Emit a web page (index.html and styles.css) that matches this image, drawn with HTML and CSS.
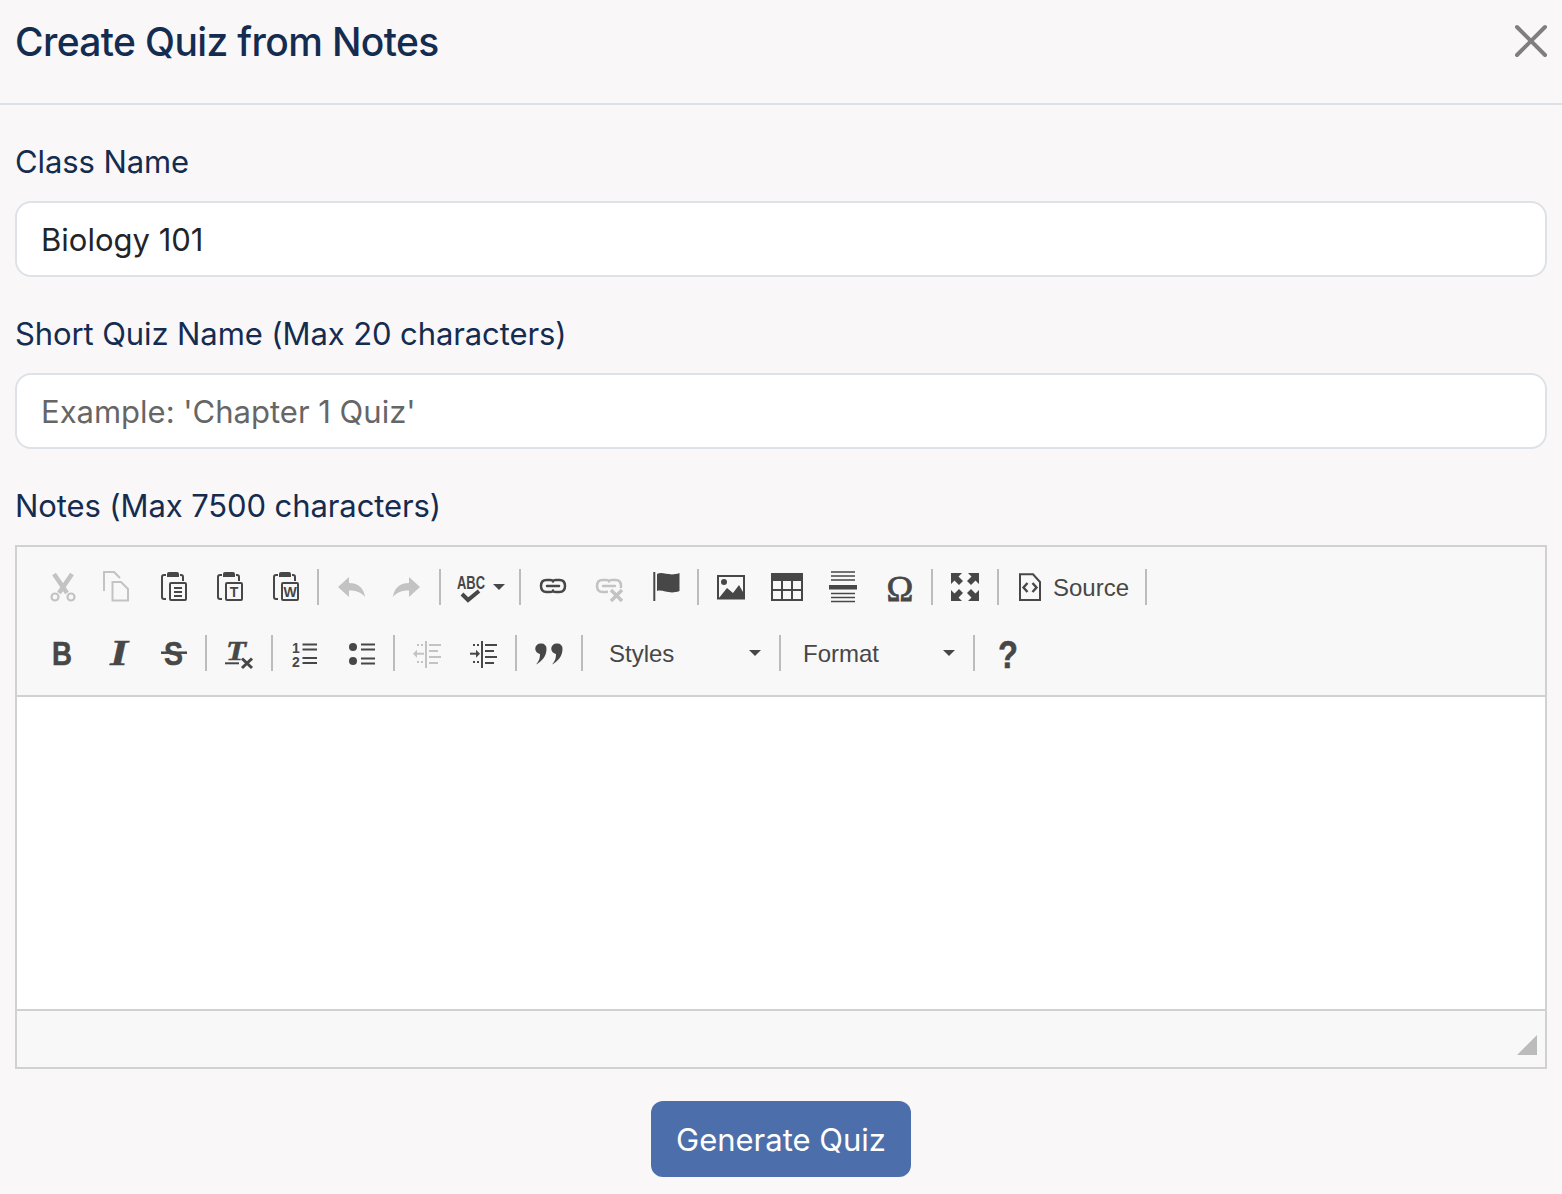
FILE: index.html
```html
<!DOCTYPE html>
<html lang="en">
<head>
<meta charset="utf-8">
<title>Create Quiz from Notes</title>
<link rel="stylesheet" href="styles.css">
</head>
<body>
<header class="head">
  <h1 class="title">Create Quiz from Notes</h1>
  <button class="close" aria-label="Close"><svg width="32" height="32" viewBox="0 0 32 32"><path d="M2 2L30 30M30 2L2 30" fill="none" stroke="currentColor" stroke-width="4" stroke-linecap="round"/></svg></button>
</header>
<main class="form">
  <label class="label">Class Name</label>
  <input class="field" type="text" value="Biology 101">
  <label class="label">Short Quiz Name (Max 20 characters)</label>
  <input class="field" type="text" placeholder="Example: 'Chapter 1 Quiz'">
  <label class="label">Notes (Max 7500 characters)</label>
  <section class="editor">
    <div class="toolbar">
      <div class="row">
        <span class="tb off"><svg width="32" height="32" viewBox="0 0 32 32"><path d="M9 3L22 22M27 3L14 22" fill="none" stroke="currentColor" stroke-width="4.500"/><circle cx="10" cy="26" r="3.500" fill="none" stroke="currentColor" stroke-width="2.200"/><circle cx="26" cy="26" r="3.500" fill="none" stroke="currentColor" stroke-width="2.200"/></svg></span>
        <span class="tb off"><svg width="32" height="32" viewBox="0 0 32 32"><path d="M3 20V1H13L19 7" fill="none" stroke="currentColor" stroke-width="2"/><path d="M11.500 11H20L27 18V29.500H11.500Z" fill="none" stroke="currentColor" stroke-width="2"/></svg></span>
        <span class="tb"><svg width="32" height="32" viewBox="0 0 32 32"><path d="M9 4H7Q5 4 5 6V26Q5 28 7 28H9M23 4H24Q26 4 26 6V10" fill="none" stroke="currentColor" stroke-width="2"/><path d="M10 6V3Q10 1 12 1H20Q22 1 22 3V6Z" fill="currentColor"/><rect x="13" y="12" width="16" height="17" rx="1" fill="none" stroke="currentColor" stroke-width="2"/><path d="M17 17H25M17 21H25M17 25H25" stroke="currentColor" stroke-width="2"/></svg></span>
        <span class="tb"><svg width="32" height="32" viewBox="0 0 32 32"><path d="M9 4H7Q5 4 5 6V26Q5 28 7 28H9M23 4H24Q26 4 26 6V10" fill="none" stroke="currentColor" stroke-width="2"/><path d="M10 6V3Q10 1 12 1H20Q22 1 22 3V6Z" fill="currentColor"/><rect x="13" y="12" width="16" height="17" rx="1" fill="none" stroke="currentColor" stroke-width="2"/><text x="21" y="26" class="svg-bold" font-size="14" text-anchor="middle" fill="currentColor">T</text></svg></span>
        <span class="tb"><svg width="32" height="32" viewBox="0 0 32 32"><path d="M9 4H7Q5 4 5 6V26Q5 28 7 28H9M23 4H24Q26 4 26 6V10" fill="none" stroke="currentColor" stroke-width="2"/><path d="M10 6V3Q10 1 12 1H20Q22 1 22 3V6Z" fill="currentColor"/><rect x="13" y="12" width="16" height="17" rx="1" fill="none" stroke="currentColor" stroke-width="2"/><text x="21" y="26" class="svg-bold" font-size="14" text-anchor="middle" fill="currentColor">W</text></svg></span>
        <span class="sep"></span>
        <span class="tb off"><svg width="32" height="32" viewBox="0 0 32 32"><path d="M3 16L14 6V12C24 12 29 18 30 26C26 21 21 19.500 14 19.500V26Z" fill="currentColor"/></svg></span>
        <span class="tb off"><svg width="32" height="32" viewBox="0 0 32 32"><path d="M29 16L18 6V12C8 12 3 18 2 26C6 21 11 19.500 18 19.500V26Z" fill="currentColor"/></svg></span>
        <span class="sep"></span>
        <span class="tb tb-spell"><svg width="32" height="32" viewBox="0 0 32 32"><text x="2" y="18" class="svg-bold" font-size="19" textLength="28" lengthAdjust="spacingAndGlyphs" fill="currentColor">ABC</text><path d="M7 23L13 29L24 20" fill="none" stroke="currentColor" stroke-width="4"/></svg><span class="caret caret-spell"></span></span>
        <span class="sep"></span>
        <span class="tb"><svg width="32" height="32" viewBox="0 0 32 32"><path d="M9.500 9Q4 9 4 15T9.500 21H13Q16 21 16 19.500Q16 21 19 21H22.500Q28 21 28 15T22.500 9H19Q16 9 16 10.500Q16 9 13 9Z" fill="none" stroke="currentColor" stroke-width="2.500" stroke-linejoin="round"/><path d="M10 15H22" stroke="currentColor" stroke-width="2.500" stroke-linecap="round"/></svg></span>
        <span class="tb off"><svg width="32" height="32" viewBox="0 0 32 32"><path d="M9.500 9Q4 9 4 15T9.500 21H13Q16 21 16 19.500Q16 21 19 21H22.500Q28 21 28 15T22.500 9H19Q16 9 16 10.500Q16 9 13 9Z" fill="none" stroke="currentColor" stroke-width="2.500" stroke-linejoin="round"/><path d="M10 15H22" stroke="currentColor" stroke-width="2.500" stroke-linecap="round"/><rect x="15" y="17" width="16" height="15" fill="#f8f8f8"/><path d="M18 19L29 30M29 19L18 30" stroke="currentColor" stroke-width="3.500"/></svg></span>
        <span class="tb"><svg width="32" height="32" viewBox="0 0 32 32"><path d="M5.300 1V30" stroke="currentColor" stroke-width="2"/><path d="M8 3C14 0 20 6 30.500 2V20C20 24 14 18 8 20Z" fill="currentColor"/></svg></span>
        <span class="sep"></span>
        <span class="tb"><svg width="32" height="32" viewBox="0 0 32 32"><rect x="3" y="5" width="26" height="22.500" fill="none" stroke="currentColor" stroke-width="2"/><circle cx="9" cy="11" r="3" fill="currentColor"/><path d="M4 27L12 17L18 22L24 14L28 21V27Z" fill="currentColor"/></svg></span>
        <span class="tb"><svg width="32" height="32" viewBox="0 0 32 32"><rect x="1" y="3" width="30" height="26" fill="none" stroke="currentColor" stroke-width="2"/><rect x="0" y="2" width="32" height="8" fill="currentColor"/><path d="M11 9V29M21 9V29M1 19H31" stroke="currentColor" stroke-width="2"/></svg></span>
        <span class="tb"><svg width="32" height="32" viewBox="0 0 32 32"><path d="M4 1H28M4 5H28M4 9H28M4 22.500H28M4 26.500H28M4 30.500H28" stroke="currentColor" stroke-width="1.500"/><rect x="2" y="14" width="28" height="4.500" fill="currentColor"/></svg></span>
        <span class="tb"><svg width="32" height="32" viewBox="0 0 32 32"><text x="17" y="30" class="svg-serif" font-size="36" text-anchor="middle" fill="currentColor" stroke="currentColor" stroke-width="0.800">Ω</text></svg></span>
        <span class="sep"></span>
        <span class="tb"><svg width="32" height="32" viewBox="0 0 32 32"><g fill="currentColor"><path d="M2 2H13L9.500 5.500L14 10L10 14L5.500 9.500L2 13Z"/><path d="M30 2H19L22.500 5.500L18 10L22 14L26.500 9.500L30 13Z"/><path d="M2 30H13L9.500 26.500L14 22L10 18L5.500 22.500L2 19Z"/><path d="M30 30H19L22.500 26.500L18 22L22 18L26.500 22.500L30 19Z"/></g></svg></span>
        <span class="sep"></span>
        <span class="tb tb-source"><svg width="32" height="32" viewBox="0 0 32 32"><path d="M6 3.300H19L26 11V29H6Z" fill="none" stroke="currentColor" stroke-width="2"/><path d="M13.500 12L9.500 16.500L13.500 21M18.500 12L22.500 16.500L18.500 21" fill="none" stroke="currentColor" stroke-width="2.400"/></svg><span class="tb-text tb-text-top">Source</span></span>
        <span class="sep"></span>
      </div>
      <div class="row">
        <span class="tb"><svg width="32" height="32" viewBox="0 0 32 32"><text x="7" y="28" class="svg-bold" font-size="33" textLength="20" lengthAdjust="spacingAndGlyphs" fill="currentColor" stroke="currentColor" stroke-width="0.500">B</text></svg></span>
        <span class="tb"><svg width="32" height="32" viewBox="0 0 32 32"><text x="9" y="28" class="svg-serif-bi" font-size="36" textLength="18" lengthAdjust="spacingAndGlyphs" fill="currentColor" stroke="currentColor" stroke-width="0.500">I</text></svg></span>
        <span class="tb"><svg width="32" height="32" viewBox="0 0 32 32"><text x="7" y="28" class="svg-bold" font-size="33" textLength="19" lengthAdjust="spacingAndGlyphs" fill="currentColor" stroke="currentColor" stroke-width="0.500">S</text><path d="M4 15.700H30" stroke="currentColor" stroke-width="2.500"/></svg></span>
        <span class="sep"></span>
        <span class="tb"><svg width="32" height="32" viewBox="0 0 32 32"><text x="3" y="23" class="svg-serif-bi" font-size="28" textLength="20" lengthAdjust="spacingAndGlyphs" fill="currentColor" stroke="currentColor" stroke-width="0.500">T</text><path d="M2 26.300H16" stroke="currentColor" stroke-width="2"/><path d="M19 21.500L29 31M29 21.500L19 31" stroke="currentColor" stroke-width="3"/></svg></span>
        <span class="sep"></span>
        <span class="tb"><svg width="32" height="32" viewBox="0 0 32 32"><text x="3" y="15.700" class="svg-bold" font-size="14" fill="currentColor">1</text><text x="3" y="29.700" class="svg-bold" font-size="14" fill="currentColor">2</text><path d="M13.500 7.500H28M13.500 12.500H28M13.500 21H28M13.500 26H28" stroke="currentColor" stroke-width="2"/></svg></span>
        <span class="tb"><svg width="32" height="32" viewBox="0 0 32 32"><circle cx="8" cy="10" r="4" fill="currentColor"/><circle cx="8" cy="24" r="4" fill="currentColor"/><path d="M16 7.500H30M16 12.500H30M16 21.500H30M16 26.500H30" stroke="currentColor" stroke-width="2"/></svg></span>
        <span class="sep"></span>
        <span class="tb off"><svg width="32" height="32" viewBox="0 0 32 32"><path d="M15 4V31" stroke="currentColor" stroke-width="2"/><path d="M18 8H30M18 14H27M18 20H30M18 26H27" stroke="currentColor" stroke-width="2"/><path d="M6 8H8M10 8H12M6 25H8M10 25H12" stroke="currentColor" stroke-width="2"/><path d="M13 16.700H5" stroke="currentColor" stroke-width="2"/><path d="M6 12.700L2 16.700L6 20.700Z" fill="currentColor"/></svg></span>
        <span class="tb"><svg width="32" height="32" viewBox="0 0 32 32"><path d="M15 4V31" stroke="currentColor" stroke-width="2"/><path d="M18 8H30M18 14H27M18 20H30M18 26H27" stroke="currentColor" stroke-width="2"/><path d="M6 8H8M10 8H12M6 25H8M10 25H12" stroke="currentColor" stroke-width="2"/><path d="M3 16.700H9" stroke="currentColor" stroke-width="2"/><path d="M9 12.700L13 16.700L9 20.700Z" fill="currentColor"/></svg></span>
        <span class="sep"></span>
        <span class="tb"><svg width="32" height="32" viewBox="0 0 32 32"><path d="M8 6.500A5 5 0 0 1 13.500 12C13.500 19 9 24.500 3 27.500C6 24 7 21.500 7 17A5.200 5.200 0 0 1 8 6.500Z" fill="currentColor"/><path d="M24 6.500A5 5 0 0 1 29.500 12C29.500 19 25 24.500 19 27.500C22 24 23 21.500 23 17A5.200 5.200 0 0 1 24 6.500Z" fill="currentColor"/></svg></span>
        <span class="sep"></span>
        <span class="combo combo-styles"><span class="tb-text tb-text-low">Styles</span><span class="caret"></span></span>
        <span class="sep"></span>
        <span class="combo combo-format"><span class="tb-text tb-text-low">Format</span><span class="caret"></span></span>
        <span class="sep"></span>
        <span class="tb"><svg width="32" height="32" viewBox="0 0 32 32"><text x="17" y="30.500" class="svg-bold" font-size="39" textLength="20" lengthAdjust="spacingAndGlyphs" text-anchor="middle" fill="currentColor" stroke="currentColor" stroke-width="0.500">?</text></svg></span>
      </div>
    </div>
    <div class="content"></div>
    <div class="statusbar"><span class="resizer"></span></div>
  </section>
  <div class="actions"><button class="submit">Generate Quiz</button></div>
</main>
</body>
</html>
```
FILE: styles.css
```css
* { box-sizing: border-box; }
html, body { margin: 0; padding: 0; }
body {
  width: 1562px;
  height: 1194px;
  overflow: hidden;
  background: #f9f7f8;
  color: #142c50;
  font-family: Inter, "Liberation Sans", sans-serif;
}
svg { overflow: visible; flex: none; }
.head {
  height: 105px;
  padding: 0 15px 19px 15px;
  border-bottom: 2px solid #dee2e6;
  display: flex;
  align-items: center;
  justify-content: space-between;
}
.title {
  margin: 0;
  font-size: 39px;
  line-height: 60px;
  font-weight: 500;
  letter-spacing: -0.64px;
  color: #142c50;
}
.close {
  padding: 0;
  border: 0;
  background: none;
  color: #7f7f7f;
  display: flex;
  margin-top: -2px;
}
.form {
  padding: 33px 15px 0 15px;
  display: flex;
  flex-direction: column;
}
.label {
  font-size: 31px;
  line-height: 48px;
  letter-spacing: -0.1px;
  margin-bottom: 15px;
}
.field {
  height: 76px;
  margin-bottom: 33px;
  padding: 0 24px;
  border: 2px solid #dee2e6;
  border-radius: 16px;
  background: #fff;
  font: 400 31px Inter, "Liberation Sans", sans-serif;
  color: #212529;
}
.field::placeholder { color: #666; opacity: 1; }
.editor {
  height: 524px;
  border: 2px solid #d1d1d1;
  display: flex;
  flex-direction: column;
}
.toolbar {
  height: 150px;
  padding: 22px 0 0 16px;
  background: #f8f8f8;
  border-bottom: 2px solid #d1d1d1;
  display: flex;
  flex-direction: column;
  gap: 30px;
  color: #474747;
  font-family: "Liberation Sans", Arial, sans-serif;
}
.row {
  height: 36px;
  display: flex;
  align-items: center;
}
.tb {
  width: 56px;
  height: 36px;
  display: flex;
  align-items: center;
  justify-content: center;
  color: #474747;
  flex: none;
}
.tb.off { color: #c3c3c3; }
.tb-spell { width: 70px; justify-content: flex-start; padding-left: 10px; }
.tb-source { width: 138px; justify-content: flex-start; padding-left: 11px; gap: 7px; }
.tb-text { font-size: 24px; line-height: 36px; color: #474747; }
.tb-text-top { padding-top: 1px; }
.tb-text-low { padding-top: 2px; }
.sep {
  width: 2px;
  height: 36px;
  margin: 0 4px;
  background: #bcbcbc;
  flex: none;
}
.caret {
  width: 0;
  height: 0;
  border-left: 6px solid transparent;
  border-right: 6px solid transparent;
  border-top: 6px solid #474747;
  flex: none;
}
.caret-spell { margin-left: 6px; }
.combo {
  height: 36px;
  display: flex;
  align-items: center;
  justify-content: space-between;
  flex: none;
}
.combo-styles { width: 188px; padding: 0 14px 0 22px; }
.combo-format { width: 184px; padding: 0 14px 0 18px; }
.svg-bold { font-family: "Liberation Sans", sans-serif; font-weight: 700; }
.svg-serif { font-family: "Liberation Serif", serif; font-weight: 400; }
.svg-serif-bi { font-family: "Liberation Serif", serif; font-weight: 700; font-style: italic; }
.content {
  flex: 1;
  background: #fff;
}
.statusbar {
  height: 58px;
  padding: 0 8px 12px 0;
  background: #f8f8f8;
  border-top: 2px solid #d1d1d1;
  display: flex;
  align-items: flex-end;
  justify-content: flex-end;
}
.resizer {
  width: 0;
  height: 0;
  border-left: 20px solid transparent;
  border-bottom: 20px solid #bbb;
}
.actions {
  margin-top: 32px;
  display: flex;
  justify-content: center;
}
.submit {
  width: 260px;
  height: 76px;
  padding: 0;
  border: 0;
  border-radius: 12px;
  background: #4c6fab;
  color: #fff;
  font: 400 31px Inter, "Liberation Sans", sans-serif;
}
```
